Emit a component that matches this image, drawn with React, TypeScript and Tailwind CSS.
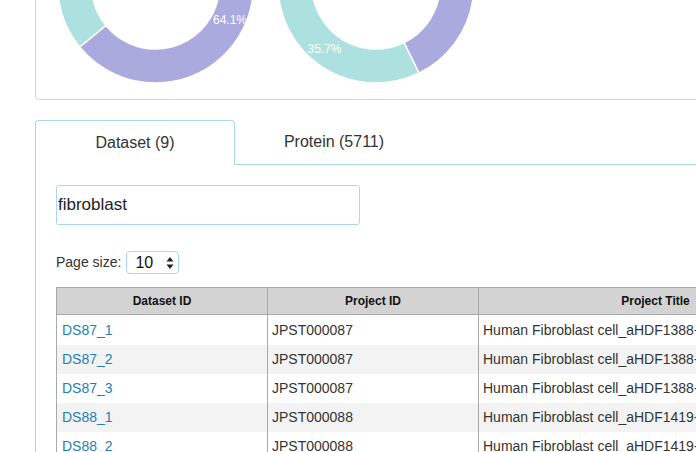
import React from "react";

const TEAL = "#ade1e0";
const PURPLE = "#aaaadf";

function arcPath(cx: number, cy: number, R: number, r: number, a0: number, a1: number) {
  const rad = (d: number) => (d * Math.PI) / 180;
  const p = (rr: number, a: number) => [cx + rr * Math.cos(rad(a)), cy + rr * Math.sin(rad(a))];
  const large = a1 - a0 > 180 ? 1 : 0;
  const [x0, y0] = p(R, a0);
  const [x1, y1] = p(R, a1);
  const [x2, y2] = p(r, a1);
  const [x3, y3] = p(r, a0);
  return `M${x0} ${y0} A${R} ${R} 0 ${large} 1 ${x1} ${y1} L${x2} ${y2} A${r} ${r} 0 ${large} 0 ${x3} ${y3} Z`;
}

function Donut({ cx, cy, segs }: { cx: number; cy: number; segs: { a0: number; a1: number; color: string }[] }) {
  return (
    <g>
      {segs.map((s, i) => (
        <path key={i} d={arcPath(cx, cy, 98, 64, s.a0, s.a1)} fill={s.color} stroke="#ffffff" strokeWidth={1.5} />
      ))}
    </g>
  );
}

const rows = [
  { id: "DS87_1", pid: "JPST000087", title: "Human Fibroblast cell_aHDF1388-" },
  { id: "DS87_2", pid: "JPST000087", title: "Human Fibroblast cell_aHDF1388-" },
  { id: "DS87_3", pid: "JPST000087", title: "Human Fibroblast cell_aHDF1388-" },
  { id: "DS88_1", pid: "JPST000088", title: "Human Fibroblast cell_aHDF1419-" },
  { id: "DS88_2", pid: "JPST000088", title: "Human Fibroblast cell_aHDF1419-" },
];

export default function App() {
  return (
    <div className="w-[696px] h-[452px] overflow-hidden bg-white font-['Liberation_Sans',Arial,sans-serif]">
      {/* chart card */}
      <div className="ml-[35px] -mt-[101px] h-[201px] w-[700px] border border-[#d4d4d4] rounded-bl-[4px] overflow-hidden">
        <svg width="700" height="199" viewBox="36 -100 700 199" className="block">
          <Donut
            cx={155.5}
            cy={-15}
            segs={[
              { a0: -90, a1: 140.76, color: PURPLE },
              { a0: 140.76, a1: 270, color: TEAL },
            ]}
          />
          <Donut
            cx={376}
            cy={-15}
            segs={[
              { a0: 63.9, a1: 192.4, color: TEAL },
              { a0: 192.4, a1: 423.9, color: PURPLE },
            ]}
          />
          <text x="230" y="24" textAnchor="middle" fill="#ffffff" fontSize="12" fontFamily="Liberation Sans, Arial, sans-serif">
            64.1%
          </text>
          <text x="324.5" y="52.5" textAnchor="middle" fill="#ffffff" fontSize="12" fontFamily="Liberation Sans, Arial, sans-serif">
            35.7%
          </text>
        </svg>
      </div>

      {/* tabs */}
      <div className="ml-[35px] mt-[20px]">
        <div className="flex h-[45px]">
          <div className="w-[200px] border-l border-t border-r border-[#a9d8e8] rounded-t-[4px] flex items-center justify-center text-[16px] text-[#333]">
            Dataset (9)
          </div>
          <div className="flex-1 border-b border-[#a9d8e8] flex">
            <div className="w-[198px] flex items-center justify-center text-[16px] text-[#333]">Protein (5711)</div>
          </div>
        </div>

        <div className="border-l border-[#a9d8e8] pl-[20px] pt-[20px]">
          <div className="w-[304px] h-[40px] border border-[#a9d8e8] rounded-[3px] pl-px flex items-center text-[17px] text-[#222]">
            fibroblast
          </div>

          <div className="mt-[26px] flex items-center h-[23px] text-[14px] text-[#333]">
            <span>Page size:</span>
            <div className="ml-[5px] w-[53px] h-[23px] border border-[#a9d8e8] rounded-[4px] flex items-center pl-[8px] pr-[4px] text-[16px] text-[#111]">
              <span className="flex-1">10</span>
              <svg width="8" height="14" viewBox="0 0 8 14">
                <path d="M4 1 L7.5 5.5 L0.5 5.5 Z" fill="#222" />
                <path d="M4 13 L7.5 8.5 L0.5 8.5 Z" fill="#222" />
              </svg>
            </div>
          </div>

          {/* table */}
          <div className="mt-[13px] w-[800px]">
            <div className="flex h-[28px] bg-[#d3d3d3] border-t border-b border-l border-[#a9a9a9] text-[12px] font-bold text-[#111]">
              <div className="w-[211px] border-r border-[#a9a9a9] flex items-center justify-center">Dataset ID</div>
              <div className="w-[211px] border-r border-[#a9a9a9] flex items-center justify-center">Project ID</div>
              <div className="w-[354px] border-r border-[#a9a9a9] flex items-center justify-center">Project Title</div>
            </div>
            {rows.map((r, i) => (
              <div
                key={r.id}
                className={`flex border-l border-[#a9a9a9] text-[14px] text-[#333] ${i === 0 ? "h-[30px]" : "h-[29px]"} ${
                  i % 2 === 1 ? "bg-[#f3f3f3]" : "bg-white"
                }`}
              >
                <div className="w-[211px] border-r border-[#a9a9a9] flex items-center pl-[5px] text-[#1f7fb6]">{r.id}</div>
                <div className="w-[211px] border-r border-[#a9a9a9] flex items-center pl-[4px]">{r.pid}</div>
                <div className="w-[354px] border-r border-[#a9a9a9] flex items-center pl-[4px] whitespace-nowrap">{r.title}</div>
              </div>
            ))}
          </div>
        </div>
      </div>
    </div>
  );
}
